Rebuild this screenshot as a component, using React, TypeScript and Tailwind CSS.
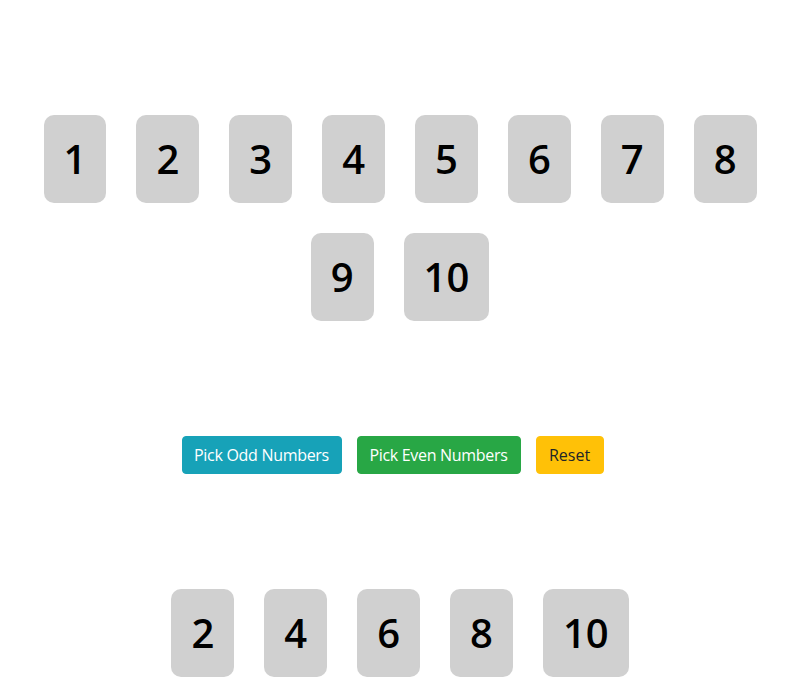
import { useState } from "react";

const numbers = [1, 2, 3, 4, 5, 6, 7, 8, 9, 10];

function Card(props: { value: number }) {
  return (
    <div className="m-[15px] rounded-[10px] bg-[#d0d0d0] px-[20px] py-[20px] text-[40px] leading-[48px] font-semibold text-black">
      {props.value}
    </div>
  );
}

export default function App() {
  const [picked, setPicked] = useState<number[]>(numbers.filter((n) => n % 2 === 0));

  return (
    <div className="min-h-screen bg-white font-['Open_Sans','Noto_Sans',sans-serif]">
      {/* all numbers */}
      <div className="flex flex-wrap justify-center pt-[100px]">
        {numbers.map((n) => (
          <Card key={n} value={n} />
        ))}
      </div>

      {/* buttons */}
      <div className="flex justify-center pt-[100px] pb-[100px]">
        <button
          onClick={() => setPicked(numbers.filter((n) => n % 2 === 1))}
          className="mr-[15px] w-[160px] rounded-[4px] border border-[#17a2b8] bg-[#17a2b8] py-[6px] text-center text-[16px] leading-[24px] tracking-[-0.3px] text-white"
        >
          Pick Odd Numbers
        </button>
        <button
          onClick={() => setPicked(numbers.filter((n) => n % 2 === 0))}
          className="mr-[15px] w-[164px] rounded-[4px] border border-[#28a745] bg-[#28a745] py-[6px] text-center text-[16px] leading-[24px] tracking-[-0.3px] text-white"
        >
          Pick Even Numbers
        </button>
        <button
          onClick={() => setPicked([])}
          className="mr-[15px] w-[68px] rounded-[4px] border border-[#ffc107] bg-[#ffc107] py-[6px] text-center text-[16px] leading-[24px] text-[#212529]"
        >
          Reset
        </button>
      </div>

      {/* picked numbers */}
      <div className="flex flex-wrap justify-center">
        {picked.map((n) => (
          <Card key={n} value={n} />
        ))}
      </div>
    </div>
  );
}
